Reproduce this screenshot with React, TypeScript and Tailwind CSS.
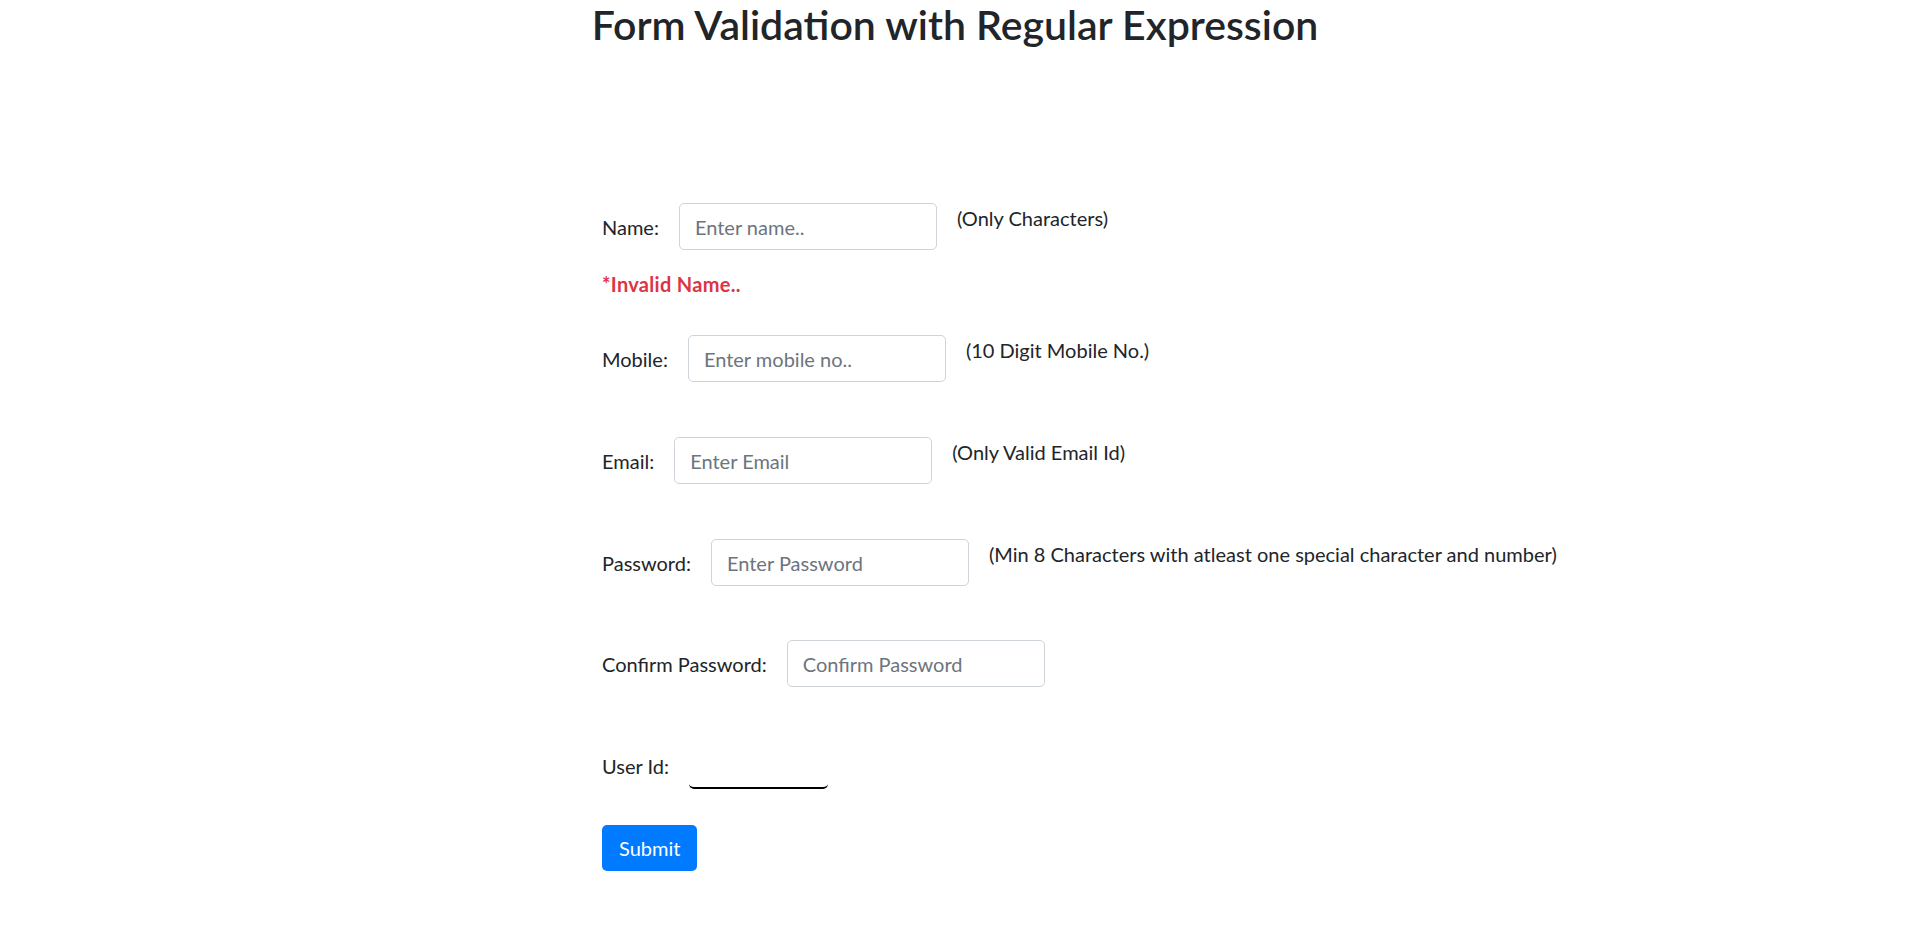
import React, { useState } from 'react'

const font = { fontFamily: 'Lato, "Noto Sans", sans-serif' }

interface FieldProps {
  label: string
  placeholder: string
  hint?: string
  type?: string
  value: string
  onChange: (v: string) => void
}

function Field({ label, placeholder, hint, type = 'text', value, onChange }: FieldProps) {
  return (
    <div className="flex items-start gap-[20px]">
      <label className="h-[47px] flex items-center text-[20px] text-[#212529]">{label}</label>
      <input
        type={type}
        value={value}
        placeholder={placeholder}
        onChange={(e) => onChange(e.target.value)}
        className="h-[47px] w-[258px] px-[15px] border border-[#ced4da] rounded-[5px] text-[20px] text-[#495057] placeholder:text-[#6c757d] outline-none"
      />
      {hint && <span className="text-[20px] leading-[30px] text-[#212529]">{hint}</span>}
    </div>
  )
}

export default function App() {
  const [name, setName] = useState('')
  const [mobile, setMobile] = useState('')
  const [email, setEmail] = useState('')
  const [password, setPassword] = useState('')
  const [confirm, setConfirm] = useState('')
  const [userId, setUserId] = useState('')

  return (
    <div className="min-h-[935px] bg-white" style={font}>
      <h2 className="pt-[1px] text-center text-[41px] leading-[48px] font-semibold text-[#212529]">
        Form Validation with Regular Expression
      </h2>

      <form className="pl-[602px] flex flex-col items-start" onSubmit={(e) => e.preventDefault()}>
        <div className="mt-[154px]">
          <Field label="Name:" placeholder="Enter name.." hint="(Only Characters)" value={name} onChange={setName} />
        </div>
        <span className="mt-[19px] text-[20px] leading-[30px] font-bold tracking-[0.3px] text-[#dc3545]">*Invalid Name..</span>

        <div className="mt-[36px]">
          <Field label="Mobile:" placeholder="Enter mobile no.." hint="(10 Digit Mobile No.)" value={mobile} onChange={setMobile} />
        </div>
        <div className="mt-[55px]">
          <Field label="Email:" placeholder="Enter Email" hint="(Only Valid Email Id)" value={email} onChange={setEmail} />
        </div>
        <div className="mt-[55px]">
          <Field
            label="Password:"
            type="password"
            placeholder="Enter Password"
            hint="(Min 8 Characters with atleast one special character and number)"
            value={password}
            onChange={setPassword}
          />
        </div>
        <div className="mt-[54px]">
          <Field label="Confirm Password:" type="password" placeholder="Confirm Password" value={confirm} onChange={setConfirm} />
        </div>

        <div className="mt-[55px] flex items-center gap-[20px]">
          <label className="text-[20px] text-[#212529]">User Id:</label>
          <input
            value={userId}
            onChange={(e) => setUserId(e.target.value)}
            className="h-[47px] w-[139px] border-0 border-b-[2px] border-black rounded-[5px] text-[20px] outline-none"
          />
        </div>

        <button
          type="submit"
          className="mt-[36px] h-[46px] px-[17px] rounded-[5px] bg-[#007bff] text-white text-[20px] leading-[30px]"
        >
          Submit
        </button>
      </form>
    </div>
  )
}
